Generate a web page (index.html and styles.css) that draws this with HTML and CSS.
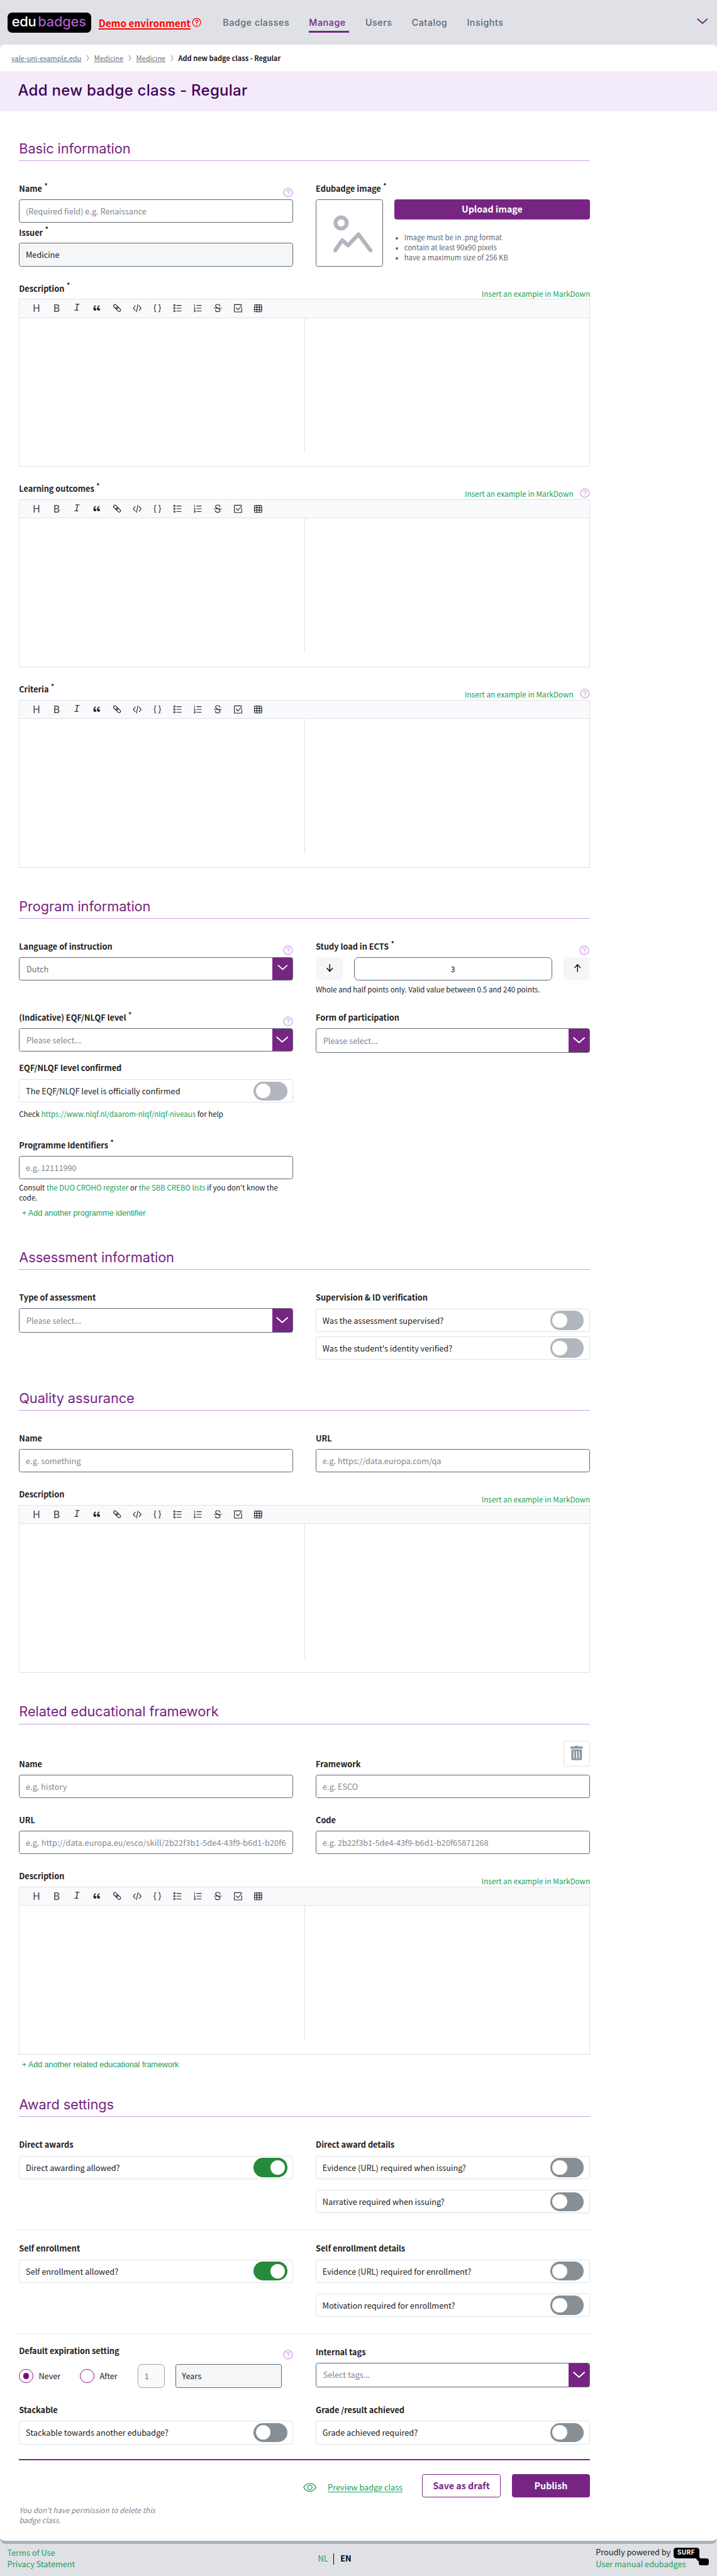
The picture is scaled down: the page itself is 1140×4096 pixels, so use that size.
FILE: index.html
```html
<!DOCTYPE html>
<html lang="en">
<head>
<meta charset="utf-8">
<title>Add new badge class - Regular</title>
<link rel="stylesheet" href="styles.css">
</head>
<body>
<svg class="defs" aria-hidden="true">
  <symbol id="help" viewBox="0 0 18 18"><g fill="none" stroke="currentColor" stroke-width="1.5" stroke-linecap="round"><circle cx="9" cy="9" r="7.7"/><path d="M6.8 7.1c0-3 4.6-2.9 4.6-.1 0 1.6-2.3 1.7-2.3 3.7"/><path d="M9.1 13.1v.1"/></g></symbol>
  <symbol id="chev" viewBox="0 0 22 12"><path d="M1.5 1.5 11 9.8l9.500-8.300" fill="none" stroke="currentColor" stroke-width="2.300" stroke-linecap="round" stroke-linejoin="round"/></symbol>
  <symbol id="crumb-sep" viewBox="0 0 6 12"><path d="M1 1l3.500 5L1 11" fill="none" stroke="currentColor" stroke-width="1"/></symbol>
  <symbol id="md-tools" viewBox="0 0 324 18">
    <g fill="none" stroke="#24292e" stroke-width="1.300" stroke-linecap="round" stroke-linejoin="round">
      <g fill="#24292e" stroke="none"><circle cx="14.500" cy="11" r="2.600"/><circle cx="21" cy="11" r="2.600"/></g>
      <path d="M12.500 10.500c0-3 1-4.500 3-5.700M19 10.500c0-3 1-4.500 3-5.700" stroke-width="1.700"/>
      <g transform="rotate(45 54 9)"><rect x="46" y="6.300" width="9" height="5" rx="2.500"/><rect x="52.500" y="6.300" width="9" height="5" rx="2.500"/></g>
      <path d="M86.500 5 83 9l3.500 4M93.500 5 97 9l-3.500 4M91.300 2.500l-2.600 13"/>
      <path d="M123.500 2.500c-2.500 0-1.800 1.500-1.800 3.500 0 2-.4 2.500-1.700 3 1.300.5 1.700 1 1.700 3 0 2-.7 3.500 1.800 3.500M128.500 2.500c2.500 0 1.800 1.500 1.800 3.500 0 2 .4 2.500 1.700 3-1.300.5-1.700 1-1.700 3 0 2 .7 3.500-1.800 3.500"/>
      <path d="M160.500 4h8M160.500 9h8M160.500 14h8"/><g stroke-width="1.200"><circle cx="156.500" cy="4" r="1.300"/><circle cx="156.500" cy="9" r="1.300"/><circle cx="156.500" cy="14" r="1.300"/></g>
      <path d="M196.500 4h8M196.500 9h8M196.500 14h8"/><path d="M192.500 2.300v3.500M191.700 8h1.800l-1.500 2.400h1.800M191.800 12.500h1.700v3h-1.700M192 14h1.500" stroke-width="1"/>
      <path d="M238 5.200C237.500 1.500 230 1.200 230 5c0 4 8 3.200 8 7.600 0 3.900-8 3.600-8.400-.4M227.500 9h13"/>
      <path d="M276 2.700h-12.300v13h13v-7.500M267 8.500l3.300 3.300 6.400-7.800"/>
      <rect x="299.500" y="3" width="13" height="12.500" rx="1.500"/><path d="M299.500 7.200h13M299.500 11.400h13M303.800 3v12.500M308.200 3v12.500"/>
    </g>
  </symbol>
</svg>

<div class="page">
<header class="topbar">
  <div class="logo"><span>edu</span><span class="logo-b">badges</span></div>
  <a class="demo">Demo environment</a><svg class="demo-help"><use href="#help"/></svg>
  <nav class="nav"><a>Badge classes</a><a class="on">Manage</a><a>Users</a><a>Catalog</a><a>Insights</a></nav>
  <svg class="acct"><use href="#chev"/></svg>
</header>

<main class="panel">
  <div class="crumbs"><a>yale-uni-example.edu</a><svg><use href="#crumb-sep"/></svg><a>Medicine</a><svg><use href="#crumb-sep"/></svg><a>Medicine</a><svg><use href="#crumb-sep"/></svg><b>Add new badge class - Regular</b></div>
  <h1>Add new badge class - Regular</h1>

  <div class="form">
    <h2 class="first">Basic information</h2>
    <div class="row">
      <div class="col">
        <div class="lab"><span>Name<sup>*</sup></span><svg class="help"><use href="#help"/></svg></div>
        <input placeholder="(Required field) e.g. Renaissance">
        <div class="lab issuer"><span>Issuer<sup>*</sup></span></div>
        <input class="ro" value="Medicine" readonly>
      </div>
      <div class="col">
        <div class="lab"><span>Edubadge image<sup>*</sup></span></div>
        <div class="upload">
          <div class="pic"><svg viewBox="0 0 72 68"><g fill="none" stroke="#b2b6be" stroke-linecap="round" stroke-linejoin="round"><circle cx="15" cy="14" r="10" stroke-width="7"/><path d="M4.500 63 17 45l10.500 9L46 34.500 67.500 63" stroke-width="7"/></g></svg></div>
          <div class="upcol">
            <div class="btn wide">Upload image</div>
            <ul><li>Image must be in .png format</li><li>contain at least 90x90 pixels</li><li>have a maximum size of 256 KB</li></ul>
          </div>
        </div>
      </div>
    </div>

    <div class="mdfield">
      <div class="lab"><span>Description<sup>*</sup></span><a class="ins">Insert an example in MarkDown</a></div>
      <div class="editor"><div class="bar"><span>H</span><span class="bb">B</span><i>I</i><svg><use href="#md-tools"/></svg></div><div class="split"></div></div>
    </div>
    <div class="mdfield">
      <div class="lab"><span>Learning outcomes<sup>*</sup></span><a class="ins">Insert an example in MarkDown</a><svg class="help mdh"><use href="#help"/></svg></div>
      <div class="editor"><div class="bar"><span>H</span><span class="bb">B</span><i>I</i><svg><use href="#md-tools"/></svg></div><div class="split"></div></div>
    </div>
    <div class="mdfield">
      <div class="lab"><span>Criteria<sup>*</sup></span><a class="ins">Insert an example in MarkDown</a><svg class="help mdh"><use href="#help"/></svg></div>
      <div class="editor"><div class="bar"><span>H</span><span class="bb">B</span><i>I</i><svg><use href="#md-tools"/></svg></div><div class="split"></div></div>
    </div>

    <h2>Program information</h2>
    <div class="row">
      <div class="col">
        <div class="lab"><span>Language of instruction</span><svg class="help"><use href="#help"/></svg></div>
        <div class="select h42 chosen"><span>Dutch</span><div class="drop sm"><svg><use href="#chev"/></svg></div></div>
      </div>
      <div class="col">
        <div class="lab"><span>Study load in ECTS<sup>*</sup></span><svg class="help"><use href="#help"/></svg></div>
        <div class="stepper">
          <div class="step"><svg viewBox="0 0 14 16"><path d="M7 1.500v12.500M2 8.500 7 14l5-5.500"/></svg></div>
          <input class="num" value="3">
          <div class="step"><svg viewBox="0 0 14 16"><path d="M7 14.500V2M2 7.500 7 2l5 5.500"/></svg></div>
        </div>
        <p class="hint">Whole and half points only. Valid value between 0.5 and 240 points.</p>
      </div>
    </div>
    <div class="row next">
      <div class="col">
        <div class="lab"><span>(Indicative) EQF/NLQF level<sup>*</sup></span><svg class="help"><use href="#help"/></svg></div>
        <div class="select h42"><span>Please select...</span><div class="drop"><svg><use href="#chev"/></svg></div></div>
        <div class="lab tl conf"><span>EQF/NLQF level confirmed</span></div>
        <div class="switchbox"><span>The EQF/NLQF level is officially confirmed</span><div class="toggle dis"></div></div>
        <p class="check">Check <a>https://www.nlqf.nl/daarom-nlqf/nlqf-niveaus</a> for help</p>
      </div>
      <div class="col">
        <div class="lab"><span>Form of participation</span></div>
        <div class="select"><span>Please select...</span><div class="drop"><svg><use href="#chev"/></svg></div></div>
      </div>
    </div>
    <div class="row ident">
      <div class="col">
        <div class="lab"><span>Programme Identifiers<sup>*</sup></span></div>
        <input placeholder="e.g. 12111990">
        <p class="consult">Consult <a>the DUO CROHO register</a> or <a>the SBB CREBO lists</a> if you don't know the<br>code.</p>
        <a class="add">+ Add another programme identifier</a>
      </div>
    </div>

    <h2 class="assess">Assessment information</h2>
    <div class="row">
      <div class="col">
        <div class="lab"><span>Type of assessment</span></div>
        <div class="select"><span>Please select...</span><div class="drop"><svg><use href="#chev"/></svg></div></div>
      </div>
      <div class="col">
        <div class="lab tl"><span>Supervision &amp; ID verification</span></div>
        <div class="switchbox"><span>Was the assessment supervised?</span><div class="toggle dis"></div></div>
        <div class="switchbox tight"><span>Was the student's identity verified?</span><div class="toggle dis"></div></div>
      </div>
    </div>

    <h2 class="qa">Quality assurance</h2>
    <div class="row">
      <div class="col"><div class="lab"><span>Name</span></div><input placeholder="e.g. something"></div>
      <div class="col"><div class="lab"><span>URL</span></div><input placeholder="e.g. https://data.europa.com/qa"></div>
    </div>
    <div class="mdfield">
      <div class="lab"><span>Description</span><a class="ins">Insert an example in MarkDown</a></div>
      <div class="editor"><div class="bar"><span>H</span><span class="bb">B</span><i>I</i><svg><use href="#md-tools"/></svg></div><div class="split"></div></div>
    </div>

    <h2>Related educational framework</h2>
    <div class="trash"><svg viewBox="0 0 22 26"><path fill="#8e979f" fill-rule="evenodd" d="M8 0h6v1.200h6.500q1.500 0 1.500 1.500V5H0V2.700q0-1.500 1.500-1.500H8zM1.500 6.500h19v17q0 2-2 2h-15q-2 0-2-2zM5.500 9.500v13h1.500v-13zM10.200 9.500v13h1.600v-13zM15 9.500v13h1.500v-13z"/></svg></div>
    <div class="row afterbin">
      <div class="col"><div class="lab"><span>Name</span></div><input placeholder="e.g. history"></div>
      <div class="col"><div class="lab"><span>Framework</span></div><input placeholder="e.g. ESCO"></div>
    </div>
    <div class="row next">
      <div class="col"><div class="lab"><span>URL</span></div><input class="long" placeholder="e.g. http://data.europa.eu/esco/skill/2b22f3b1-5de4-43f9-b6d1-b20f6"></div>
      <div class="col"><div class="lab"><span>Code</span></div><input placeholder="e.g. 2b22f3b1-5de4-43f9-b6d1-b20f65871268"></div>
    </div>
    <div class="mdfield">
      <div class="lab"><span>Description</span><a class="ins">Insert an example in MarkDown</a></div>
      <div class="editor"><div class="bar"><span>H</span><span class="bb">B</span><i>I</i><svg><use href="#md-tools"/></svg></div><div class="split"></div></div>
    </div>
    <a class="add">+ Add another related educational framework</a>

    <h2 class="award">Award settings</h2>
    <div class="row dotted">
      <div class="col"><div class="lab tl"><span>Direct awards</span></div>
        <div class="switchbox"><span>Direct awarding allowed?</span><div class="toggle on"></div></div></div>
      <div class="col"><div class="lab tl"><span>Direct award details</span></div>
        <div class="switchbox"><span>Evidence (URL) required when issuing?</span><div class="toggle"></div></div>
        <div class="switchbox loose"><span>Narrative required when issuing?</span><div class="toggle"></div></div></div>
    </div>
    <div class="row dotted after">
      <div class="col"><div class="lab tl"><span>Self enrollment</span></div>
        <div class="switchbox"><span>Self enrollment allowed?</span><div class="toggle on"></div></div></div>
      <div class="col"><div class="lab tl"><span>Self enrollment details</span></div>
        <div class="switchbox"><span>Evidence (URL) required for enrollment?</span><div class="toggle"></div></div>
        <div class="switchbox loose"><span>Motivation required for enrollment?</span><div class="toggle"></div></div></div>
    </div>
    <div class="row after">
      <div class="col exp">
        <div class="lab"><span>Default expiration setting</span><svg class="help"><use href="#help"/></svg></div>
        <div class="radios"><div class="radio sel"></div><span class="never">Never</span><div class="radio"></div><span class="aft">After</span><input class="one" value="1"><input class="ro years" value="Years" readonly></div>
      </div>
      <div class="col">
        <div class="lab"><span>Internal tags</span></div>
        <div class="select"><span>Select tags...</span><div class="drop"><svg><use href="#chev"/></svg></div></div>
      </div>
    </div>
    <div class="row next">
      <div class="col"><div class="lab tl"><span>Stackable</span></div>
        <div class="switchbox"><span>Stackable towards another edubadge?</span><div class="toggle"></div></div></div>
      <div class="col"><div class="lab tl"><span>Grade /result achieved</span></div>
        <div class="switchbox"><span>Grade achieved required?</span><div class="toggle"></div></div></div>
    </div>

    <div class="actions">
      <svg class="eye" viewBox="0 0 24 16"><g fill="none" stroke="#18a058" stroke-width="1.500"><path d="M1 8C6-1.300 18-1.300 23 8 18 17.300 6 17.300 1 8z"/><circle cx="12" cy="8" r="4"/></g></svg>
      <a class="preview">Preview badge class</a>
      <div class="btn ghost">Save as draft</div>
      <div class="btn">Publish</div>
    </div>
    <p class="noperm">You don't have permission to delete this<br>badge class.</p>
  </div>
</main>

<footer class="foot">
  <div class="fl"><a>Terms of Use</a><a>Privacy Statement</a></div>
  <div class="lang"><a>NL</a><b>EN</b></div>
  <div class="fr">
    <div class="pow"><span>Proudly powered by</span><div class="surf">SURF<i></i></div></div>
    <a>User manual edubadges</a>
  </div>
</footer>
</div>
</body>
</html>
```

FILE: styles.css
```css
* { box-sizing: border-box; }
body { margin: 0; background: #dfe1e6; }
.page {
  zoom: 0.8902;
  height: 4601px;
  color: #212121;
  font: 14.3px/24px "Noto Sans CJK SC", "Source Sans Pro", sans-serif;
  overflow: hidden;
}
.defs { display: none; }
svg { display: block; flex: none; }
a { color: #18a058; }
p, ul, h1, h2 { margin: 0; }

/* top bar */
.topbar { height: 80px; display: flex; align-items: flex-start; padding-left: 13px; }
.logo { margin-top: 22px; width: 150px; height: 36px; background: #000; border-radius: 8px; color: #fff; padding-left: 8px; display: flex; gap: 3px; font: 500 24.500px/33px Inter, sans-serif; letter-spacing: -.2px; }
.logo-b { color: #a95fc8; }
.demo { margin: 27px 0 0 13px; width: 167px; color: #f00; font-size: 17.300px; line-height: 28px; font-weight: 700; text-decoration: underline; text-decoration-thickness: 2px; text-underline-offset: 2px; white-space: nowrap; }
.demo-help { width: 17px; height: 17px; color: #f00; margin-top: 31px; }
.nav { display: flex; gap: 29px; margin: 27px 0 0 38px; }
.nav a { color: #5c6873; font: 500 16px/27px Inter, sans-serif; letter-spacing: .65px; height: 31px; padding-right: 6px; white-space: nowrap; }
.nav .on { color: #772583; border-bottom: 3.400px solid #772583; }
.acct { width: 20px; height: 11px; color: #772583; margin: 33px 16px 0 auto; }

/* panel */
.panel { height: 4464px; background: #fff; border-radius: 8px 8px 10px 10px; border-bottom: 5.700px solid #a9b3bc; }
.crumbs { height: 47px; padding-left: 20px; display: flex; align-items: center; font-size: 12.400px; line-height: 45px; white-space: nowrap; color: #212121; }
.crumbs a { color: #68707a; text-decoration: underline; text-underline-offset: 1px; }
.crumbs svg { width: 6px; height: 12px; margin: 1px 8px 0 9px; color: #68707a; }
h1 { height: 72px; padding-left: 32px; background: #f4ebfa; color: #3f0058; font: 500 27px/70px Inter, sans-serif; letter-spacing: .3px; white-space: nowrap; }
.form { margin-left: 34px; width: 1020px; }
h2 { height: 40px; margin: 52px 0 37px; border-bottom: 1px solid #c99fe4; color: #772583; font: 400 24.500px/34px Inter, sans-serif; letter-spacing: -.1px; white-space: nowrap; }
h2.first { margin-top: 49px; }
h2.assess { margin-top: 53px; }
h2.qa { margin-top: 51px; }
h2.award { margin-top: 45px; }

/* fields */
.row { display: grid; grid-template-columns: 490px 490px; gap: 40px; align-items: start; }
.next, .mdfield { margin-top: 27px; }
.lab { height: 24px; margin-bottom: 7px; display: flex; justify-content: space-between; font-weight: 700; white-space: nowrap; }
.lab.tl { margin-bottom: 8px; }
.lab sup { font-size: 11.500px; line-height: 0; vertical-align: 7px; margin-left: 4px; font-weight: 700; }
.help { width: 18px; height: 18px; color: #cf9fe6; margin: 10px 1px 0 0; }
.issuer { margin-top: 5px; }
input { display: block; width: 100%; height: 42px; padding: 0 11px; margin: 0; border: 1px solid #5c6873; border-radius: 4px; background: #fff; color: #212121; font: inherit; outline: 0; }
input::placeholder { color: #7f8790; opacity: 1; }
.long { letter-spacing: .1px; }
.ro { background: #f4f6f8; }
.upload { display: flex; gap: 20px; }
.pic { width: 120px; height: 120px; border: 1px solid #5c6873; border-radius: 4px; padding: 27px 0 0 29px; }
.pic svg { width: 72px; height: 68px; }
.upcol { flex: 1; }
.btn { width: 140px; height: 42px; border-radius: 4px; background: #772583; color: #fff; font-weight: 700; font-size: 16px; line-height: 38px; text-align: center; border: 1px solid #772583; white-space: nowrap; }
.btn.wide { width: 100%; height: 36px; line-height: 31px; }
.btn.ghost { background: #fff; color: #772583; }
ul { margin-top: 23px; padding-left: 18px; font-size: 12.800px; line-height: 18px; color: #5c6873; }
ul li::marker { font-size: 11px; }

/* markdown editor */
.ins { margin: 9px 0 0 auto; font-size: 13.250px; font-weight: 400; }
.mdh { margin: 11px 0 0 12px; }
.editor { height: 300px; border: 1px solid #dfe1e6; }
.bar { height: 33px; background: #f9fafc; border-bottom: 1px solid #dfe1e6; padding-left: 12px; display: flex; align-items: center; color: #3b4046; }
.bar span, .bar i { width: 36px; text-align: center; font: 400 18px/32px "Noto Sans", sans-serif; }
.bar i { font: italic 400 18px/32px "Liberation Mono", monospace; }
.bar svg { width: 324px; height: 18px; }
.split { height: 240px; width: 510px; border-right: 1px solid #dfe1e6; }

/* selects and steppers */
.select { height: 44px; border: 1px solid #5c6873; border-radius: 4px; display: flex; justify-content: space-between; align-items: center; color: #7f8790; padding-left: 12px; overflow: hidden; }
.select.h42 { height: 42px; }
.select.chosen { color: #68707a; }
.drop { width: 37px; align-self: stretch; background: #772583; color: #fff; display: flex; align-items: center; justify-content: center; }
.drop svg { width: 24px; height: 12px; }
.drop.sm svg { width: 19px; height: 10px; margin-top: -4px; }
.stepper { display: flex; justify-content: space-between; }
.step { width: 48px; height: 42px; border-radius: 8px; background: #f4f6f8; padding: 11px 0 0 18px; }
.step svg { width: 14px; height: 16px; fill: none; stroke: #000; stroke-width: 1.500; stroke-linecap: round; stroke-linejoin: round; }
.num { width: 354px; border-radius: 8px; text-align: center; }
.hint { margin-top: 5px; font-size: 12.900px; line-height: 22px; white-space: nowrap; }
.conf { margin-top: 17px; }
.check { margin-top: 10px; font-size: 12.900px; line-height: 22px; }
.ident { margin-top: 32px; }
.consult { margin-top: 5px; font-size: 12.900px; line-height: 18px; white-space: nowrap; }
.add { display: block; margin: 8px 0 0 5px; height: 20px; font: 14.300px/22px "Liberation Sans", sans-serif; letter-spacing: -.1px; white-space: nowrap; }
.mdfield + .add { margin-top: 7px; }

/* switches */
.switchbox { height: 42px; border: 1px solid #dfe1e6; border-radius: 4px; padding: 0 10px 0 11px; display: flex; align-items: center; justify-content: space-between; white-space: nowrap; }
.tight { margin-top: 7.500px; }
.loose { margin-top: 19px; }
.toggle { width: 60px; height: 34px; border-radius: 17px; background: #868e96; padding: 4px; display: flex; }
.toggle::before { content: ""; width: 26px; height: 26px; border-radius: 50%; background: #fff; }
.toggle.dis { background: #b2b6be; }
.toggle.on { background: #268a3b; justify-content: flex-end; }
.trash { width: 48px; height: 46px; margin: -7px 0 0 auto; border: 1px solid #dfe1e6; border-radius: 4px; padding: 8px 0 0 12px; }
.trash svg { width: 22px; height: 26px; }
.afterbin { margin-top: -17px; }
.dotted { padding-bottom: 29px; border-bottom: 2.300px dotted #f1e6f9; }
.after { margin-top: 19px; }
.exp .lab { margin: -2px 0 12px; }
.radios { display: flex; align-items: center; }
.radio { width: 25px; height: 25px; border: 1px solid #8b1c94; border-radius: 50%; flex: none; display: flex; align-items: center; justify-content: center; }
.radio.sel::before { content: ""; width: 11px; height: 11px; border-radius: 50%; background: #800080; }
.never { width: 84px; padding-left: 10px; }
.aft { width: 78px; padding-left: 10px; }
.one { width: 48px; border-radius: 8px; color: #777; background: #fafafa; border-color: #9aa2aa; }
.years { width: 189px; margin-left: 20px; padding-left: 10px; }

/* actions */
.actions { margin-top: 26.500px; border-top: 2.300px solid #772583; padding-top: 24.500px; display: flex; justify-content: flex-end; gap: 20px; }
.eye { width: 24px; height: 16px; margin-top: 16px; }
.preview { text-decoration: underline; text-underline-offset: 2px; line-height: 48px; height: 42px; margin-right: 15px; white-space: nowrap; }
.noperm { margin-top: 13px; font-size: 13.100px; line-height: 18px; font-style: italic; color: #7f8790; }

/* footer */
.foot { height: 57px; display: grid; grid-template-columns: 555px 509px 1fr; line-height: 20px; }
.fl { padding: 6px 0 0 13px; display: flex; flex-direction: column; }
.lang { display: flex; padding: 17px 0 0 13px; color: #000; }
.lang a { width: 29px; border-right: 1px solid #000; height: 20px; margin-right: 11px; }
.lang a, .lang b { line-height: 19px; }
.fr { padding-top: 5px; white-space: nowrap; }
.fr a { display: block; margin-top: 1px; }
.pow { display: flex; height: 20px; gap: 5px; }
.surf { position: relative; margin-top: 2px; width: 46px; height: 19px; border-radius: 5px; background: #000; color: #fff; text-align: center; font: 700 11px/19px Inter, sans-serif; letter-spacing: .7px; }
.surf i { position: absolute; left: 45px; top: 19px; width: 18px; height: 12px; border-radius: 4px; background: #000; }
.surf i::before { content: ""; position: absolute; left: -4px; top: -4px; width: 8px; height: 8px; background: #000; transform: skewX(35deg); }
```
